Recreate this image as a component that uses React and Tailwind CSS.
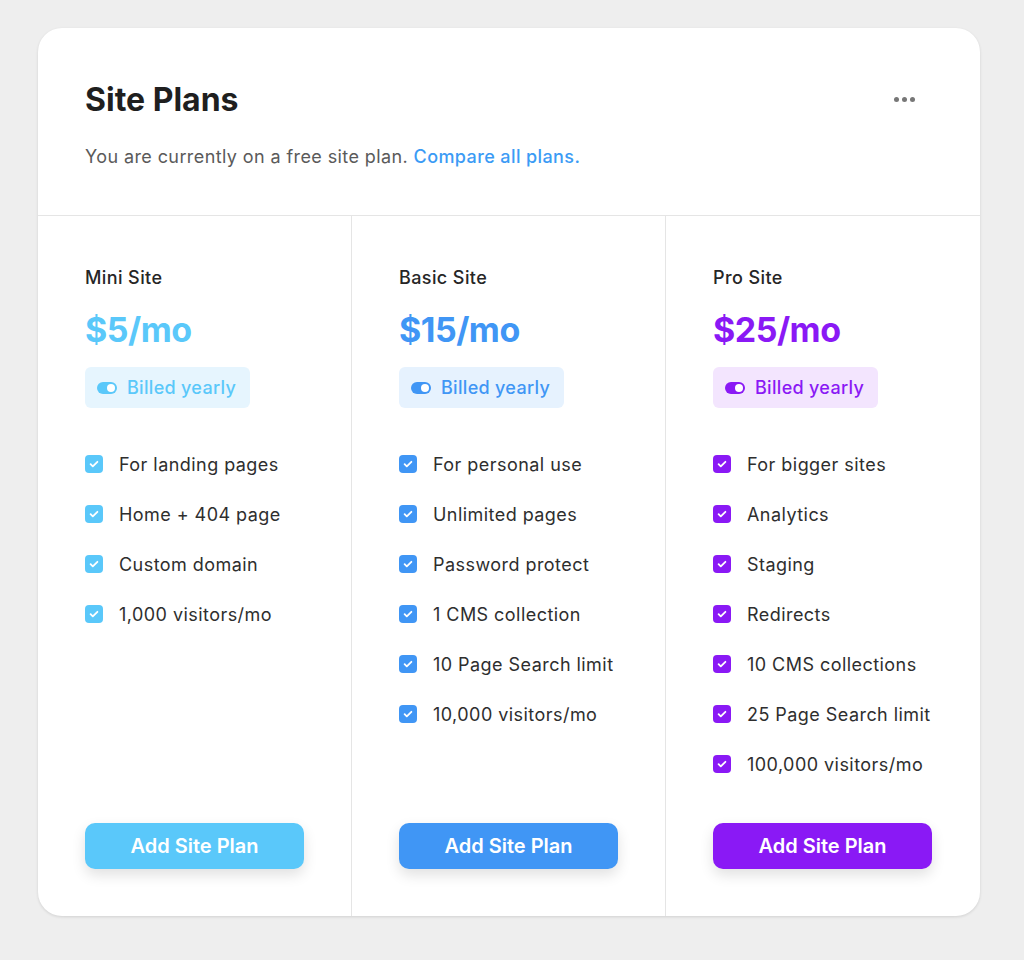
import React from "react";

const plans = [
  {
    name: "Mini Site",
    price: "$5/mo",
    text: "text-[#5ac8fa]",
    bg: "bg-[#5ac8fa]",
    badge: "bg-[#e6f5fe]",
    features: ["For landing pages", "Home + 404 page", "Custom domain", "1,000 visitors/mo"],
  },
  {
    name: "Basic Site",
    price: "$15/mo",
    text: "text-[#4096f5]",
    bg: "bg-[#4096f5]",
    badge: "bg-[#e6f2fe]",
    features: [
      "For personal use",
      "Unlimited pages",
      "Password protect",
      "1 CMS collection",
      "10 Page Search limit",
      "10,000 visitors/mo",
    ],
  },
  {
    name: "Pro Site",
    price: "$25/mo",
    text: "text-[#8a19f5]",
    bg: "bg-[#8a19f5]",
    badge: "bg-[#f3e5fe]",
    features: [
      "For bigger sites",
      "Analytics",
      "Staging",
      "Redirects",
      "10 CMS collections",
      "25 Page Search limit",
      "100,000 visitors/mo",
    ],
  },
];

const Check = ({ bg }) => (
  <span className={`flex h-[18px] w-[18px] shrink-0 items-center justify-center rounded-[4px] ${bg}`}>
    <svg width="12" height="12" viewBox="0 0 12 12" fill="none">
      <path d="M2.6 6.2l2.2 2.2 4.6-4.6" stroke="white" strokeWidth="1.8" strokeLinecap="round" strokeLinejoin="round" />
    </svg>
  </span>
);

const Toggle = ({ bg }) => (
  <span className={`relative flex h-[12px] w-[20px] items-center justify-end rounded-full ${bg} pr-[2px]`}>
    <span className="h-[8px] w-[8px] rounded-full bg-white" />
  </span>
);

export default function App() {
  return (
    <div className="min-h-screen bg-[#eeeeee] pt-[28px]" style={{ fontFamily: "Inter, 'Noto Sans', sans-serif" }}>
      <div className="ml-[38px] flex h-[888px] w-[942px] flex-col overflow-hidden rounded-[24px] bg-white shadow-[0_1px_3px_rgba(0,0,0,0.12)]">
        <div className="flex items-start justify-between border-b border-[#e5e5e5] px-[47px] pb-[44px] pt-[80px]">
          <div>
            <h1 className="-mt-[28px] text-[32px] font-bold leading-[40px] tracking-[0px] text-[#1f1f1f]">Site Plans</h1>
            <p className="mt-[23px] text-[18px] leading-[28px] tracking-[0.4px] text-[#5a5a5a]">
              You are currently on a free site plan.{" "}
              <span className="font-medium text-[#3b9bf5]">Compare all plans.</span>
            </p>
          </div>
          <div className="-mt-[11px] mr-[18px] flex gap-[3px]">
            <span className="h-[5px] w-[5px] rounded-full bg-[#777]" />
            <span className="h-[5px] w-[5px] rounded-full bg-[#777]" />
            <span className="h-[5px] w-[5px] rounded-full bg-[#777]" />
          </div>
        </div>
        <div className="grid flex-1 grid-cols-3">
          {plans.map((p, i) => (
            <div
              key={p.name}
              className={`flex flex-col px-[47px] pb-[47px] pt-[48px] ${i < 2 ? "border-r border-[#e5e5e5]" : ""}`}
            >
              <div className="text-[18px] font-medium leading-[28px] tracking-[0.4px] text-[#262626]">{p.name}</div>
              <div className={`mt-[18px] text-[34px] font-bold leading-[40px] tracking-[-0.5px] ${p.text}`}>{p.price}</div>
              <div className={`mt-[17px] flex h-[41px] w-fit items-center gap-[10px] rounded-[6px] pl-[12px] pr-[14px] ${p.badge}`}>
                <Toggle bg={p.bg} />
                <span className={`text-[18px] font-medium tracking-[0.3px] ${p.text}`}>Billed yearly</span>
              </div>
              <ul className="mt-[42px] flex flex-col gap-[22px]">
                {p.features.map((f) => (
                  <li key={f} className="flex h-[28px] items-center gap-[16px] text-[18px] tracking-[0.45px] text-[#2e2e2e]">
                    <Check bg={p.bg} />
                    {f}
                  </li>
                ))}
              </ul>
              <button
                className={`mt-auto h-[46px] w-[219px] rounded-[10px] text-[20px] font-semibold text-white shadow-[0_6px_14px_rgba(0,0,0,0.12)] ${p.bg}`}
              >
                Add Site Plan
              </button>
            </div>
          ))}
        </div>
      </div>
    </div>
  );
}
